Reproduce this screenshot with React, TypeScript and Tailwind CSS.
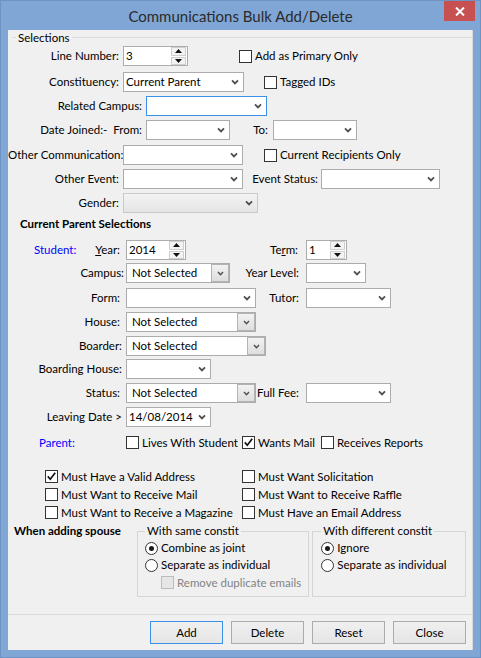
import React from "react";

function Chevron({ small = false }: { small?: boolean }) {
  return (
    <svg width={small ? 7 : 8} height={small ? 5 : 6} viewBox="0 0 8 6" className="shrink-0">
      <path d="M1 1.3 L4 4.4 L7 1.3" fill="none" stroke="#4f4f4f" strokeWidth="1.8" />
    </svg>
  );
}

function Combo({
  className = "",
  value = "",
  focused = false,
  disabled = false,
  button = false,
}: {
  className?: string;
  value?: string;
  focused?: boolean;
  disabled?: boolean;
  button?: boolean;
}) {
  const frame = focused
    ? "border-[#3c8fe6] bg-white"
    : disabled
      ? "border-[#c9c9c9] bg-linear-to-b from-[#f3f3f3] to-[#e5e5e5]"
      : "border-[#acacac] bg-white";
  return (
    <div className={`flex h-[20px] shrink-0 items-center border ${frame} ${className}`}>
      <span className={`flex-1 truncate ${button ? "pl-[5px]" : "pl-[2px]"}`}>{value}</span>
      {button ? (
        <div className="flex h-full w-[18px] items-center justify-center border border-[#b3b3b3] bg-linear-to-b from-[#f2f2f2] to-[#dedede]">
          <Chevron small />
        </div>
      ) : (
        <div className="flex w-[16px] justify-center">
          <Chevron />
        </div>
      )}
    </div>
  );
}

function Spin({ className = "", value }: { className?: string; value: string }) {
  return (
    <div className={`flex h-[20px] shrink-0 items-center border border-[#acacac] bg-white ${className}`}>
      <span className="flex-1 pl-[2px]">{value}</span>
      <div className="mr-[1px] flex h-[18px] w-[15px] flex-col gap-[1px]">
        <div className="flex flex-1 items-center justify-center border border-[#cfcfcf] bg-[#f3f3f3]">
          <svg width="7" height="4" viewBox="0 0 7 4">
            <path d="M0 4 L3.5 0 L7 4 Z" fill="#111" />
          </svg>
        </div>
        <div className="flex flex-1 items-center justify-center border border-[#cfcfcf] bg-[#f3f3f3]">
          <svg width="7" height="4" viewBox="0 0 7 4">
            <path d="M0 0 L3.5 4 L7 0 Z" fill="#111" />
          </svg>
        </div>
      </div>
    </div>
  );
}

function Box({ checked = false, disabled = false }: { checked?: boolean; disabled?: boolean }) {
  return (
    <div
      className={`flex h-[13px] w-[13px] shrink-0 items-center justify-center border ${
        disabled ? "border-[#bcbcbc] bg-[#e6e6e6]" : "border-[#333333] bg-white"
      }`}
    >
      {checked && (
        <svg width="11" height="11" viewBox="0 0 11 11">
          <path d="M1.8 5.4 L4.3 8.2 L9.2 1.8" fill="none" stroke="#111" strokeWidth="1.7" />
        </svg>
      )}
    </div>
  );
}

function Check({
  label,
  checked = false,
  disabled = false,
  className = "",
}: {
  label: string;
  checked?: boolean;
  disabled?: boolean;
  className?: string;
}) {
  return (
    <div className={`flex h-[13px] shrink-0 items-center gap-[3px] ${className}`}>
      <Box checked={checked} disabled={disabled} />
      <span className={`whitespace-nowrap ${disabled ? "text-[#838383]" : ""}`}>{label}</span>
    </div>
  );
}

function Radio({ label, checked = false }: { label: string; checked?: boolean }) {
  return (
    <div className="flex h-[14px] items-center gap-[3px]">
      <div className="flex h-[13px] w-[13px] shrink-0 items-center justify-center rounded-full border border-[#333333] bg-white">
        {checked && <div className="h-[5px] w-[5px] rounded-full bg-[#1a1a1a]" />}
      </div>
      <span className="whitespace-nowrap">{label}</span>
    </div>
  );
}

function Btn({ label, primary = false }: { label: string; primary?: boolean }) {
  return (
    <div
      className={`flex h-[23px] w-[73px] items-center justify-center border bg-linear-to-b from-[#f0f0f0] to-[#e5e5e5] ${
        primary ? "border-[#3c8fe6]" : "border-[#acacac]"
      }`}
    >
      {label}
    </div>
  );
}

export default function App() {
  return (
    <div className="relative h-[658px] w-[481px] border border-[#6d93c4] bg-[#7fa6d5] font-['Lato',sans-serif] text-[11.5px] leading-[14px] text-black">
      <div className="flex h-[29px] items-center justify-center text-[15px] text-[#2b2b2b]">
        Communications Bulk Add/Delete
      </div>
      <div className="absolute right-[5px] top-0 flex h-[20px] w-[31px] items-center justify-center bg-[#c75050]">
        <svg width="10" height="9" viewBox="0 0 10 9">
          <path d="M1 0.5 L9 8.5 M9 0.5 L1 8.5" stroke="#fff" strokeWidth="2" />
        </svg>
      </div>

      <div className="ml-[7px] flex h-[620px] w-[465px] flex-col border-r border-[#dadada] bg-[#f0f0f0]">
        <div className="h-[585px] border-b border-[#dadada]">
          {/* Selections */}
          <div className="flex h-[15px] items-center pl-[4px]">
            <div className="w-[4px] border-t border-[#dadada]" />
            <span className="px-[2px]">Selections</span>
            <div className="flex-1 border-t border-[#dadada]" />
          </div>

          <div className="mt-[1px] flex h-[20px] items-center">
            <span className="w-[111px] shrink-0 text-right">Line Number:</span>
            <Spin className="ml-[4px] w-[65px]" value="3" />
            <Check className="ml-[51px]" label="Add as Primary Only" />
          </div>

          <div className="mt-[6px] flex h-[20px] items-center">
            <span className="w-[111px] shrink-0 text-right">Constituency:</span>
            <Combo className="ml-[4px] w-[121px]" value="Current Parent" />
            <Check className="ml-[20px]" label="Tagged IDs" />
          </div>

          <div className="mt-[4px] flex h-[20px] items-center">
            <span className="w-[134px] shrink-0 text-right">Related Campus:</span>
            <Combo className="ml-[4px] w-[121px]" focused />
          </div>

          <div className="mt-[4px] flex h-[20px] items-center">
            <span className="w-[134px] shrink-0 whitespace-pre text-right">Date Joined:-  From:</span>
            <Combo className="ml-[4px] w-[84px]" />
            <span className="w-[38px] shrink-0 text-right">To:</span>
            <Combo className="ml-[5px] w-[84px]" />
          </div>

          <div className="mt-[5px] flex h-[20px] items-center">
            <span className="w-[111px] shrink-0 whitespace-nowrap text-right">Other Communication:</span>
            <Combo className="ml-[4px] w-[120px]" />
            <Check className="ml-[21px]" label="Current Recipients Only" />
          </div>

          <div className="mt-[4px] flex h-[20px] items-center">
            <span className="w-[111px] shrink-0 text-right">Other Event:</span>
            <Combo className="ml-[4px] w-[120px]" />
            <span className="w-[75px] shrink-0 text-right">Event Status:</span>
            <Combo className="ml-[3px] w-[119px]" />
          </div>

          <div className="mt-[4px] flex h-[20px] items-center">
            <span className="w-[111px] shrink-0 text-right">Gender:</span>
            <Combo className="ml-[4px] w-[135px]" disabled />
          </div>

          {/* Current Parent Selections */}
          <div className="mt-[3px] flex h-[16px] items-center pl-[12px] font-bold">Current Parent Selections</div>

          <div className="mt-[8px] flex h-[20px] items-center">
            <div className="flex w-[112px] shrink-0 justify-between pl-[26px]">
              <span className="text-[#0000ff]">Student:</span>
              <span>
                <span className="underline">Y</span>ear:
              </span>
            </div>
            <Spin className="ml-[6px] w-[60px]" value="2014" />
            <span className="w-[112px] shrink-0 text-right">
              Te<span className="underline">r</span>m:
            </span>
            <Spin className="ml-[8px] w-[41px]" value="1" />
          </div>

          <div className="mt-[3px] flex h-[20px] items-center">
            <span className="w-[116px] shrink-0 text-right">Campus:</span>
            <Combo className="ml-[2px] w-[104px]" value="Not Selected" button />
            <span className="w-[69px] shrink-0 text-right">Year Level:</span>
            <Combo className="ml-[7px] w-[60px]" />
          </div>

          <div className="mt-[5px] flex h-[20px] items-center">
            <span className="w-[112px] shrink-0 text-right">Form:</span>
            <Combo className="ml-[6px] w-[130px]" />
            <span className="w-[43px] shrink-0 text-right">Tutor:</span>
            <Combo className="ml-[7px] w-[85px]" />
          </div>

          <div className="mt-[4px] flex h-[20px] items-center">
            <span className="w-[112px] shrink-0 text-right">House:</span>
            <Combo className="ml-[6px] w-[130px]" value="Not Selected" button />
          </div>

          <div className="mt-[4px] flex h-[20px] items-center">
            <span className="w-[114px] shrink-0 text-right">Boarder:</span>
            <Combo className="ml-[4px] w-[140px]" value="Not Selected" button />
          </div>

          <div className="mt-[3px] flex h-[20px] items-center">
            <span className="w-[114px] shrink-0 text-right">Boarding House:</span>
            <Combo className="ml-[4px] w-[85px]" />
          </div>

          <div className="mt-[4px] flex h-[20px] items-center">
            <span className="w-[112px] shrink-0 text-right">Status:</span>
            <Combo className="ml-[6px] w-[130px]" value="Not Selected" button />
            <span className="w-[43px] shrink-0 whitespace-nowrap text-right">Full Fee:</span>
            <Combo className="ml-[7px] w-[85px]" />
          </div>

          <div className="mt-[4px] flex h-[20px] items-center">
            <span className="w-[114px] shrink-0 whitespace-nowrap text-right">Leaving Date &gt;</span>
            <Combo className="ml-[4px] w-[85px]" value="14/08/2014" />
          </div>

          <div className="mt-[9px] flex h-[13px] items-center">
            <span className="w-[118px] shrink-0 pl-[31px] text-[#0000ff]">Parent:</span>
            <Check className="w-[116px]" label="Lives With Student" />
            <Check className="w-[79px]" label="Wants Mail" checked />
            <Check label="Receives Reports" />
          </div>

          <div className="mt-[21px] grid grid-cols-[197px_1fr] gap-y-[5px] pl-[37px]">
            <Check label="Must Have a Valid Address" checked />
            <Check label="Must Want Solicitation" />
            <Check label="Must Want to Receive Mail" />
            <Check label="Must Want to Receive Raffle" />
            <Check label="Must Want to Receive a Magazine" />
            <Check label="Must Have an Email Address" />
          </div>

          <div className="mt-[5px] flex items-start">
            <span className="w-[129px] shrink-0 pl-[6px] font-bold">When adding spouse</span>
            <fieldset className="h-[73px] w-[172px] shrink-0 border border-[#d5d5d5] px-[7px]">
              <legend className="px-[2px]">With same constit</legend>
              <div className="mt-[3px] flex flex-col gap-[3px]">
                <Radio label="Combine as joint" checked />
                <Radio label="Separate as individual" />
                <Check className="ml-[16px] mt-[1px]" label="Remove duplicate emails" disabled />
              </div>
            </fieldset>
            <fieldset className="ml-[3px] h-[73px] w-[154px] shrink-0 border border-[#d5d5d5] px-[8px]">
              <legend className="px-[2px]">With different constit</legend>
              <div className="mt-[3px] flex flex-col gap-[3px]">
                <Radio label="Ignore" checked />
                <Radio label="Separate as individual" />
              </div>
            </fieldset>
          </div>
        </div>

        <div className="mt-[6px] flex justify-end gap-[8px] pr-[6px]">
          <Btn label="Add" primary />
          <Btn label="Delete" />
          <Btn label="Reset" />
          <Btn label="Close" />
        </div>
      </div>
    </div>
  );
}
